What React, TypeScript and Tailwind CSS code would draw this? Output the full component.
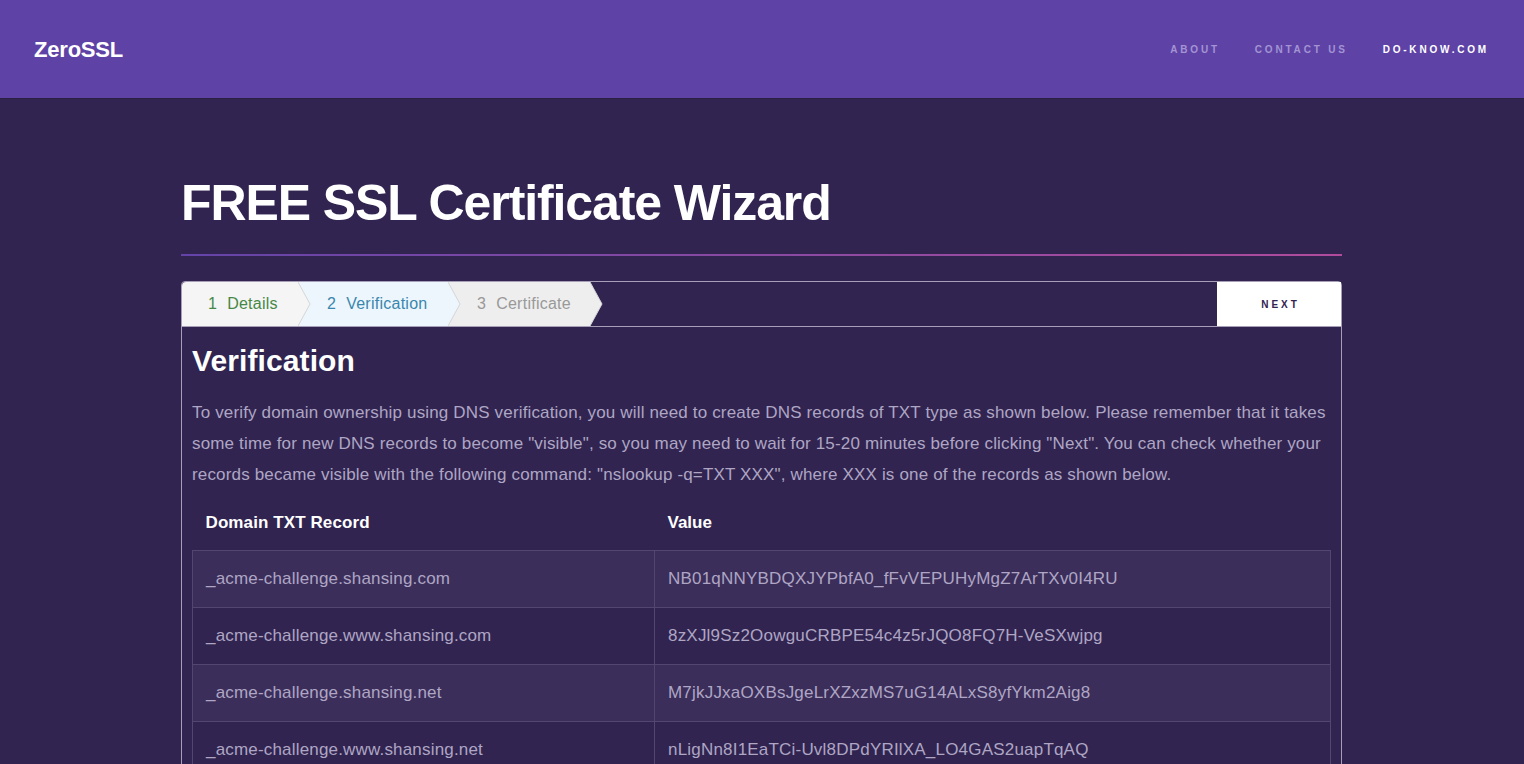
import React from 'react'

const rows = [
    ['_acme-challenge.shansing.com', 'NB01qNNYBDQXJYPbfA0_fFvVEPUHyMgZ7ArTXv0I4RU'],
    ['_acme-challenge.www.shansing.com', '8zXJl9Sz2OowguCRBPE54c4z5rJQO8FQ7H-VeSXwjpg'],
    ['_acme-challenge.shansing.net', 'M7jkJJxaOXBsJgeLrXZxzMS7uG14ALxS8yfYkm2Aig8'],
    ['_acme-challenge.www.shansing.net', 'nLigNn8I1EaTCi-Uvl8DPdYRIlXA_LO4GAS2uapTqAQ'],
]

const steps = [
    { n: '1', label: 'Details', bg: '#f5f5f5', fg: '#468847', w: 'w-[116px]', z: 'z-30' },
    { n: '2', label: 'Verification', bg: '#edf6fd', fg: '#3a87ad', w: 'w-[150px]', z: 'z-20' },
    { n: '3', label: 'Certificate', bg: '#eeeeee', fg: '#999999', w: 'w-[142px]', z: 'z-10' },
]

const Step = ({ s, first }: { s: typeof steps[number]; first: boolean }) => (
    <div
        className={`relative h-full flex items-center gap-[10px] text-[16px] tracking-[0.25px] ${s.w} ${s.z} ${first ? 'pl-[26px] rounded-tl-[4px]' : 'pl-[29px]'}`}
        style={{ backgroundColor: s.bg, color: s.fg }}
    >
        <span>{s.n}</span>
        <span>{s.label}</span>
        {/* chevron tip */}
        <svg className="absolute left-full top-0 h-full w-[14px]" viewBox="0 0 14 45" preserveAspectRatio="none">
            <polygon points="0,0 12,22.5 0,45" fill={s.bg} />
            <polyline points="0,0 12,22.5 0,45" fill="none" stroke="#d4d4d4" strokeWidth="1" />
        </svg>
    </div>
)

export default function App() {
    return (
        <div className="min-h-screen bg-[#312450] font-['Liberation_Sans',Arial,sans-serif]">
            {/* Header */}
            <header className="h-[99px] bg-[#5e42a6] border-b border-[#2c2045] flex items-center justify-between pl-[34px] pr-[35px]">
                <div className="text-white font-bold text-[22px] tracking-[-0.2px]">ZeroSSL</div>
                <nav className="flex items-center gap-[35px] text-[10px] font-bold tracking-[0.28em] uppercase">
                    <a className="text-[#a394d4]">About</a>
                    <a className="text-[#a394d4]">Contact Us</a>
                    <a className="text-white">do-know.com</a>
                </nav>
            </header>

            <main className="w-[1161px] ml-[181px] pt-[77px]">
                <h1 className="text-white font-bold text-[50px] leading-[54px] tracking-[-1.1px]">FREE SSL Certificate Wizard</h1>
                <div className="mt-[24px] h-[2px] bg-gradient-to-r from-[#6443a8] to-[#b04b9c]" />

                <div className="mt-[25px] border border-[#a79fb8] rounded-t-[4px]">
                    {/* Step bar */}
                    <div className="h-[45px] flex items-stretch justify-between border-b border-[#a79fb8]">
                        <div className="flex h-full">
                            {steps.map((s, i) => (
                                <Step key={s.n} s={s} first={i === 0} />
                            ))}
                        </div>
                        <button className="w-[124px] h-full bg-white text-[#312450] text-[10px] font-bold tracking-[0.3em] pl-[3px]">
                            NEXT
                        </button>
                    </div>

                    {/* Content */}
                    <div className="px-[10px] pt-[16px]">
                        <h2 className="text-white font-bold text-[30px] leading-[36px] tracking-[0.1px]">Verification</h2>
                        <p className="mt-[18px] text-[#aea6c4] text-[17px] leading-[31px] tracking-[0.16px]">
                            To verify domain ownership using DNS verification, you will need to create DNS records of TXT type as shown below. Please remember that it takes some time for new DNS records to become "visible", so you may need to wait for 15-20 minutes before clicking "Next". You can check whether your records became visible with the following command: "nslookup -q=TXT XXX", where XXX is one of the records as shown below.
                        </p>

                        <table className="mt-[16px] w-full border-collapse text-[17px]">
                            <thead>
                                <tr className="text-white font-bold text-left">
                                    <th className="w-[462px] px-[13px] pb-[14px] pt-[4px] font-bold tracking-[0.1px]">Domain TXT Record</th>
                                    <th className="px-[13px] pb-[14px] pt-[4px] font-bold">Value</th>
                                </tr>
                            </thead>
                            <tbody className="text-[#aea6c4]">
                                {rows.map((r, i) => (
                                    <tr key={r[0]} className={i % 2 === 0 ? 'bg-[#3c2e5b]' : 'bg-[#312450]'}>
                                        <td className="h-[57px] px-[13px] border border-[#54476f] tracking-[0.18px]">{r[0]}</td>
                                        <td className="h-[57px] px-[13px] border border-[#54476f] tracking-[0.2px]">{r[1]}</td>
                                    </tr>
                                ))}
                            </tbody>
                        </table>
                    </div>
                </div>
            </main>
        </div>
    )
}
